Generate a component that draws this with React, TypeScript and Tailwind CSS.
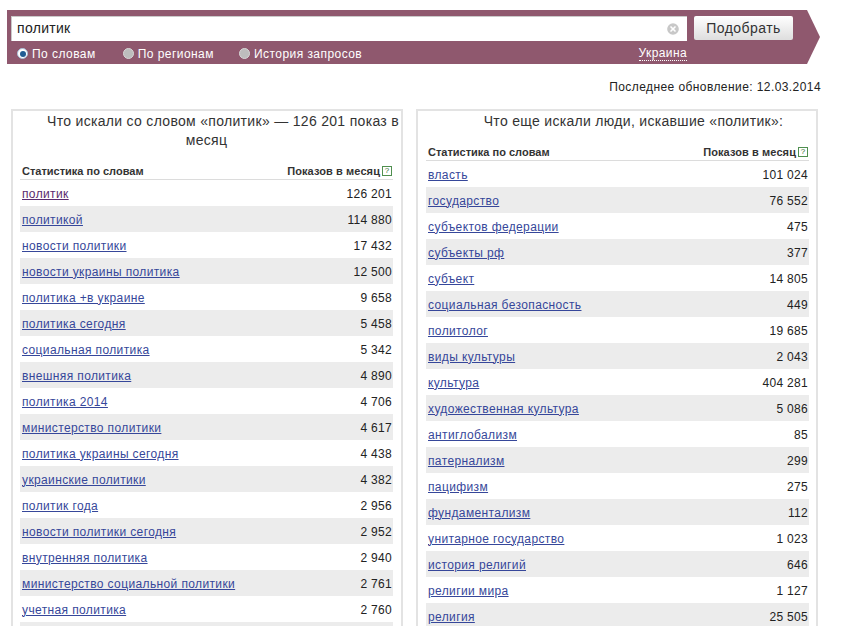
import { CircleX } from 'lucide-react';

type Row = [string, string];

const LEFT_ROWS: Row[] = [
  ['политик', '126 201'],
  ['политикой', '114 880'],
  ['новости политики', '17 432'],
  ['новости украины политика', '12 500'],
  ['политика +в украине', '9 658'],
  ['политика сегодня', '5 458'],
  ['социальная политика', '5 342'],
  ['внешняя политика', '4 890'],
  ['политика 2014', '4 706'],
  ['министерство политики', '4 617'],
  ['политика украины сегодня', '4 438'],
  ['украинские политики', '4 382'],
  ['политик года', '2 956'],
  ['новости политики сегодня', '2 952'],
  ['внутренняя политика', '2 940'],
  ['министерство социальной политики', '2 761'],
  ['учетная политика', '2 760'],
  ['', ''],
];

const RIGHT_ROWS: Row[] = [
  ['власть', '101 024'],
  ['государство', '76 552'],
  ['субъектов федерации', '475'],
  ['субъекты рф', '377'],
  ['субъект', '14 805'],
  ['социальная безопасность', '449'],
  ['политолог', '19 685'],
  ['виды культуры', '2 043'],
  ['культура', '404 281'],
  ['художественная культура', '5 086'],
  ['антиглобализм', '85'],
  ['патернализм', '299'],
  ['пацифизм', '275'],
  ['фундаментализм', '112'],
  ['унитарное государство', '1 023'],
  ['история религий', '646'],
  ['религии мира', '1 127'],
  ['религия', '25 505'],
];

function Radio({ label, checked, className }: { label: string; checked?: boolean; className?: string }) {
  return (
    <span className={`flex items-center gap-[4px] ${className ?? ''}`}>
      {checked ? (
        <span className="flex h-[11px] w-[11px] items-center justify-center rounded-full border border-[#a9c4dc] bg-white">
          <span className="h-[6px] w-[6px] rounded-full bg-[#1f5c94]" />
        </span>
      ) : (
        <span className="h-[11px] w-[11px] rounded-full border border-[#d8d8d8] bg-[#bdbdbd]" />
      )}
      {label}
    </span>
  );
}

function HelpMark() {
  return (
    <span className="ml-[2px] flex h-[10px] w-[10px] items-center justify-center border border-[#4f8f4f] text-[8px] leading-none font-normal text-[#2f6f2f]">
      ?
    </span>
  );
}

function StatsTable({ rows, visited }: { rows: Row[]; visited?: string }) {
  return (
    <div>
      <div className="flex h-[18px] items-end justify-between border-b border-[#dcdcdc] pr-[1px] pl-[2px] text-[11px] font-bold text-[#333]">
        <span>Статистика по словам</span>
        <span className="flex items-center tracking-[0.1px]">
          Показов в месяц
          <HelpMark />
        </span>
      </div>
      {rows.map(([word, count], i) => (
        <div
          key={i}
          className={`flex h-[26px] items-center justify-between pt-[1px] pr-[1px] pl-[2px] text-[12px] ${i % 2 === 1 ? 'bg-[#ececec]' : 'bg-white'}`}
        >
          {word && (
            <a
              href="#"
              className={`tracking-[0.375px] underline ${word === visited ? 'text-[#5a2a6e]' : 'text-[#36479a]'}`}
            >
              {word}
            </a>
          )}
          <span className="tracking-[0.3px] text-[#222]">{count}</span>
        </div>
      ))}
    </div>
  );
}

export default function App() {
  return (
    <div className="h-[626px] w-[857px] overflow-hidden bg-white font-['Liberation_Sans',Arial,sans-serif]">
      <div className="pt-[10px] pl-[7px]">
        {/* шапка поиска */}
        <div className="h-[54px] w-[813px] bg-[#8f586e] pt-[6px] pl-[4px] [clip-path:polygon(0_0,800px_0,813px_27px,800px_54px,0_54px)]">
          <div className="flex items-start">
            <div className="flex h-[25px] w-[676px] items-center justify-between border-t border-l border-[#c9c9c9] bg-white pr-[6px] pb-[2px] pl-[5px] text-[14px] tracking-[0.3px] text-[#222]">
              политик
              <CircleX className="mt-[2px] h-[16px] w-[16px] fill-[#c8c8c8] text-white" strokeWidth={2.5} />
            </div>
            <button className="ml-[7px] h-[24px] w-[99px] rounded-[2px] bg-gradient-to-b from-white to-[#dedede] text-[14px] tracking-[0.45px] text-[#333]">
              Подобрать
            </button>
          </div>
          <div className="flex h-[25px] w-[676px] items-center pl-[6px] text-[12px] tracking-[0.45px] text-white">
            <Radio label="По словам" checked />
            <Radio label="По регионам" className="ml-[27px]" />
            <Radio label="История запросов" className="ml-[25px]" />
            <span className="ml-auto border-b border-dotted border-white leading-[14px] tracking-[0.4px]">Украина</span>
          </div>
        </div>
      </div>

      <div className="flex h-[32px] w-[821px] items-end justify-end text-[12px] tracking-[0.42px] text-[#222]">
        Последнее обновление: 12.03.2014
      </div>

      <div className="mt-[13px] ml-[11px] flex items-start gap-[13px]">
        <div className="w-[392px] border-2 border-[#e3e3e3] pr-[8px] pl-[7px]">
          <h2 className="pt-[1px] text-[14px] leading-[19px] font-normal tracking-[0.31px] text-[#333]">
            <span className="block pl-[27px] whitespace-nowrap">Что искали со словом «политик» — 126 201 показ в</span>
            <span className="block text-center">месяц</span>
          </h2>
          <div className="mt-[12px]">
            <StatsTable rows={LEFT_ROWS} visited="политик" />
          </div>
        </div>
        <div className="w-[402px] border-2 border-[#e3e3e3] pr-[7px] pl-[8px]">
          <h2 className="pl-[32px] text-center text-[14px] leading-[20px] font-normal tracking-[0.31px] text-[#333]">
            Что еще искали люди, искавшие «политик»:
          </h2>
          <div className="mt-[12px]">
            <StatsTable rows={RIGHT_ROWS} />
          </div>
        </div>
      </div>
    </div>
  );
}
